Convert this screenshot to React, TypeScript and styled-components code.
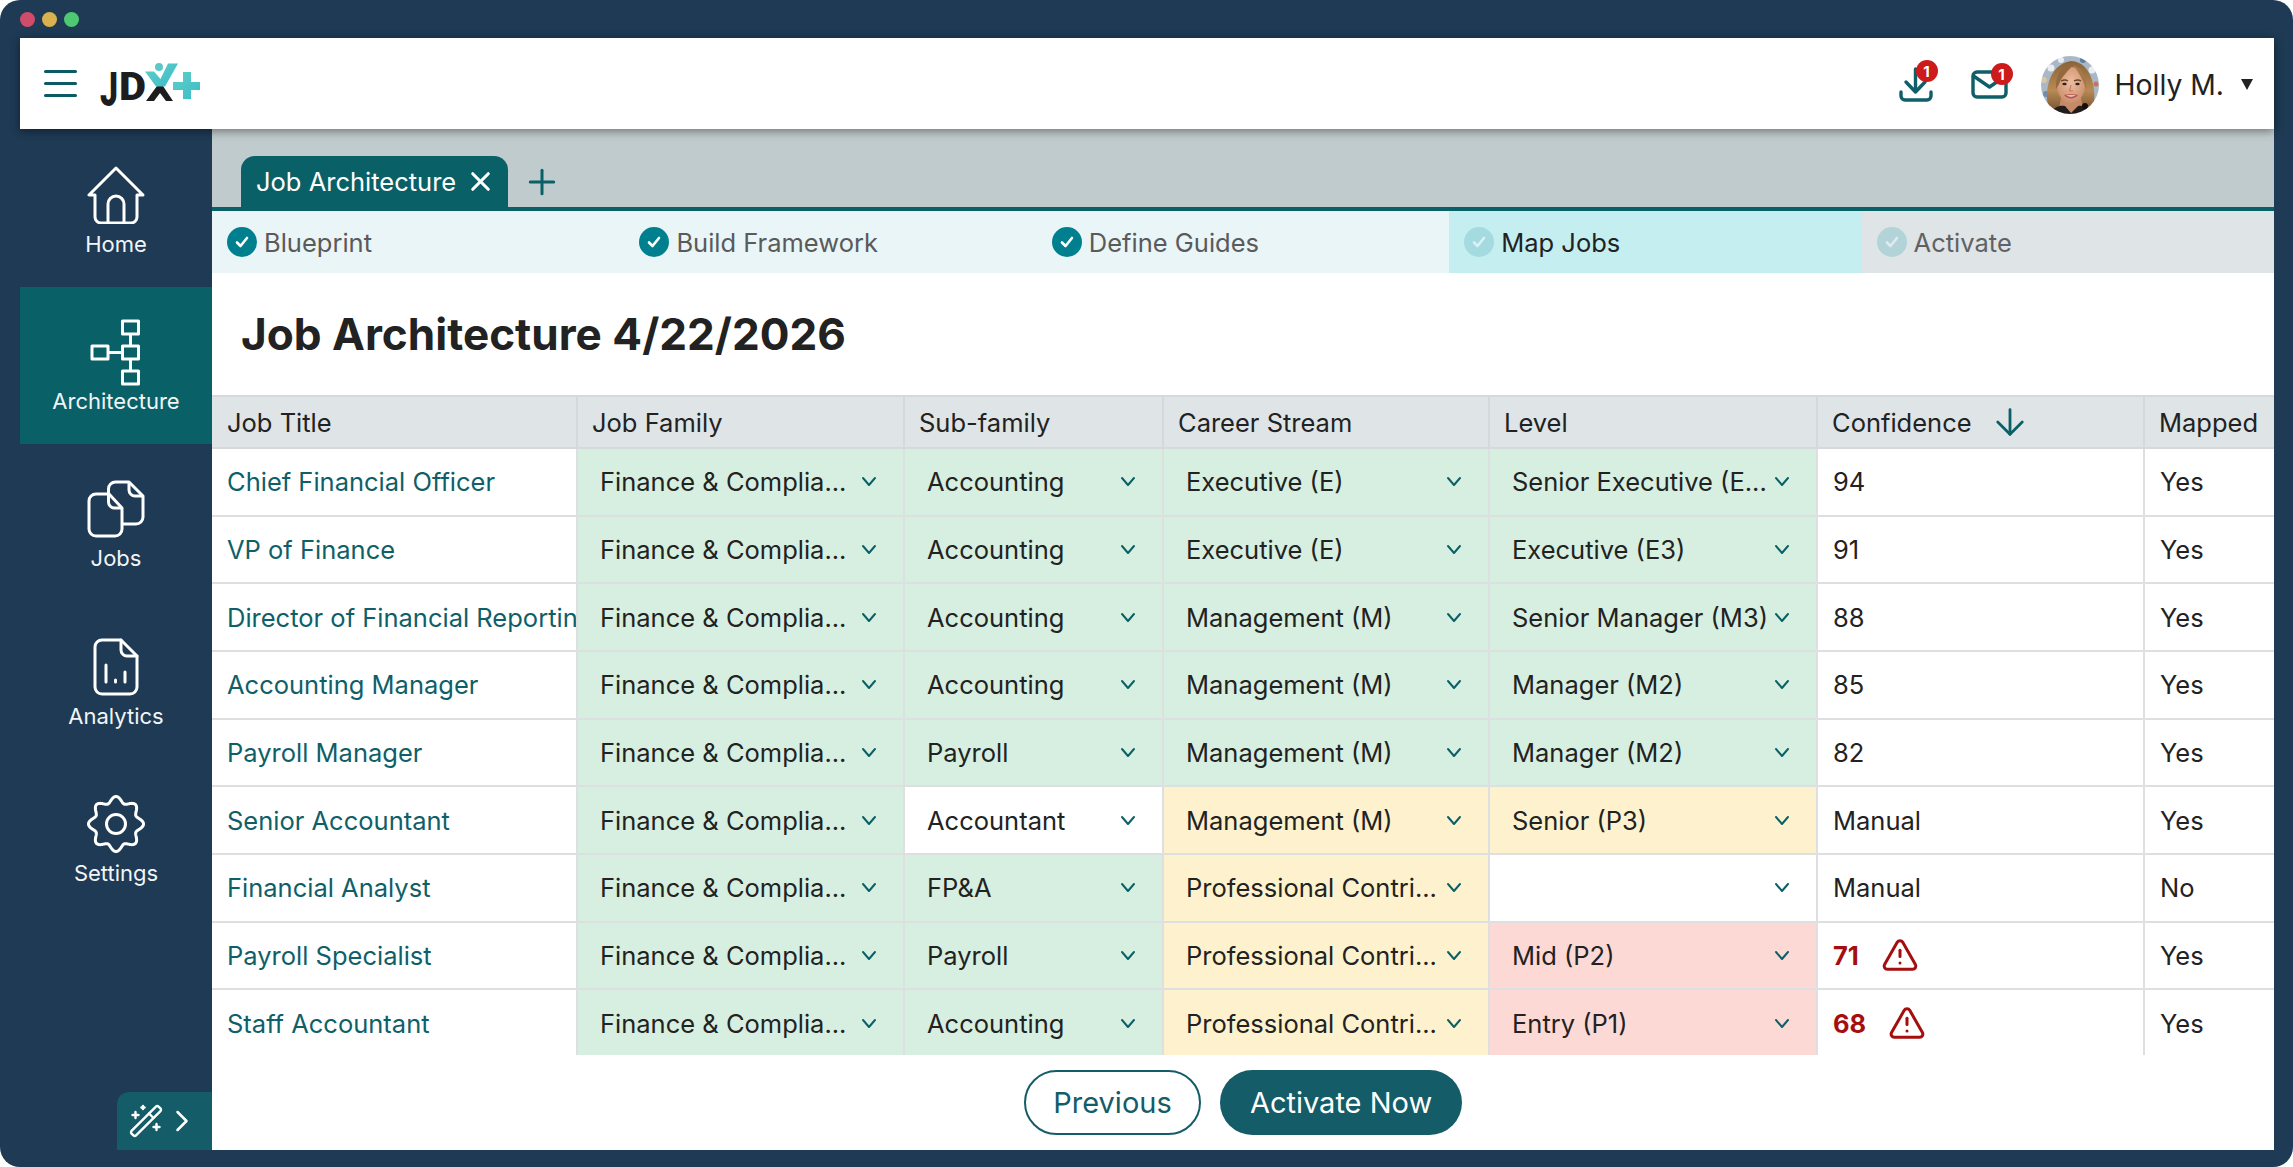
import styled, { createGlobalStyle } from "styled-components";
import { ArrowDown, ChevronRight, Plus, TriangleAlert, WandSparkles, X } from "lucide-react";

type Tone = "green" | "yellow" | "red" | "white";

interface Row {
  title: string;
  family: [string, Tone];
  sub: [string, Tone];
  stream: [string, Tone];
  level: [string, Tone];
  confidence: string;
  low?: boolean;
  mapped: string;
}

const FINANCE: [string, Tone] = ["Finance & Complia...", "green"];
const ACCOUNTING: [string, Tone] = ["Accounting", "green"];
const PAYROLL: [string, Tone] = ["Payroll", "green"];
const MGMT: [string, Tone] = ["Management (M)", "green"];
const PRO: [string, Tone] = ["Professional Contri...", "yellow"];

const rows: Row[] = [
  { title: "Chief Financial Officer", family: FINANCE, sub: ACCOUNTING, stream: ["Executive (E)", "green"], level: ["Senior Executive (E...", "green"], confidence: "94", mapped: "Yes" },
  { title: "VP of Finance", family: FINANCE, sub: ACCOUNTING, stream: ["Executive (E)", "green"], level: ["Executive (E3)", "green"], confidence: "91", mapped: "Yes" },
  { title: "Director of Financial Reporting", family: FINANCE, sub: ACCOUNTING, stream: MGMT, level: ["Senior Manager (M3)", "green"], confidence: "88", mapped: "Yes" },
  { title: "Accounting Manager", family: FINANCE, sub: ACCOUNTING, stream: MGMT, level: ["Manager (M2)", "green"], confidence: "85", mapped: "Yes" },
  { title: "Payroll Manager", family: FINANCE, sub: PAYROLL, stream: MGMT, level: ["Manager (M2)", "green"], confidence: "82", mapped: "Yes" },
  { title: "Senior Accountant", family: FINANCE, sub: ["Accountant", "white"], stream: ["Management (M)", "yellow"], level: ["Senior (P3)", "yellow"], confidence: "Manual", mapped: "Yes" },
  { title: "Financial Analyst", family: FINANCE, sub: ["FP&A", "green"], stream: PRO, level: ["", "white"], confidence: "Manual", mapped: "No" },
  { title: "Payroll Specialist", family: FINANCE, sub: PAYROLL, stream: PRO, level: ["Mid (P2)", "red"], confidence: "71", low: true, mapped: "Yes" },
  { title: "Staff Accountant", family: FINANCE, sub: ACCOUNTING, stream: PRO, level: ["Entry (P1)", "red"], confidence: "68", low: true, mapped: "Yes" },
];

const toneColors: Record<Tone, string> = {
  green: "#d7efe0",
  yellow: "#fdf2cd",
  red: "#fdd9d6",
  white: "#ffffff",
};

const GlobalStyle = createGlobalStyle`
  html, body {
    margin: 0;
    padding: 0;
    background: #ffffff;
  }
  * {
    box-sizing: border-box;
  }
`;

const Frame = styled.div`
  display: flex;
  flex-direction: column;
  width: 2293px;
  height: 1167px;
  padding: 0 19px 17px 20px;
  background: #1e3a54;
  border-radius: 20px;
  overflow: hidden;
  font-family: Inter, "Liberation Sans", sans-serif;
`;

const TitleBar = styled.div`
  display: flex;
  align-items: center;
  gap: 7px;
  height: 38px;
  flex: none;
`;

const Dot = styled.span<{ $color: string }>`
  width: 15px;
  height: 15px;
  border-radius: 50%;
  background: ${(p) => p.$color};
`;

const Header = styled.header`
  position: relative;
  z-index: 2;
  display: flex;
  align-items: center;
  flex: none;
  height: 91px;
  padding: 2px 21px 0 24px;
  background: #ffffff;
  box-shadow: 0 2px 9px rgba(0, 0, 0, 0.45);
`;

const Hamburger = styled.div`
  display: flex;
  flex-direction: column;
  gap: 8.5px;
  width: 33px;
  margin: -2px 23px 0 0;
  span {
    height: 3.5px;
    border-radius: 2px;
    background: #0b5a64;
  }
`;

const HeaderRight = styled.div`
  display: flex;
  align-items: center;
  margin-left: auto;
`;

const IconWrap = styled.div<{ $width: number; $mr: number }>`
  position: relative;
  display: flex;
  width: ${(p) => p.$width}px;
  margin-right: ${(p) => p.$mr}px;
`;

const Badge = styled.span`
  position: absolute;
  top: -7px;
  right: -5px;
  display: flex;
  align-items: center;
  justify-content: center;
  width: 22px;
  height: 22px;
  border-radius: 50%;
  background: #cd1b1b;
  color: #ffffff;
  font-size: 15px;
  font-weight: 700;
`;

const AvatarWrap = styled.div`
  width: 58px;
  height: 58px;
  border-radius: 50%;
  overflow: hidden;
  margin-right: 16px;
`;

const UserName = styled.span`
  font-size: 28.3px;
  color: #222222;
  margin-right: 17px;
`;

const Caret = styled.span`
  width: 0;
  height: 0;
  border-left: 6px solid transparent;
  border-right: 6px solid transparent;
  border-top: 11px solid #222222;
`;

const Body = styled.div`
  display: flex;
  flex: 1;
  min-height: 0;
`;

const Sidebar = styled.nav`
  position: relative;
  display: flex;
  flex-direction: column;
  flex: none;
  width: 192px;
  padding-top: 1px;
  background: #1e3a54;
`;

const NavItem = styled.div<{ $active?: boolean }>`
  display: flex;
  flex-direction: column;
  align-items: center;
  height: 157.2px;
  background: ${(p) => (p.$active ? "#0a6067" : "transparent")};
  color: #ffffff;
`;

const NavIcon = styled.div`
  display: flex;
  align-items: center;
  justify-content: center;
  height: 70px;
  margin-top: 30px;
`;

const NavLabel = styled.span`
  margin-top: 1px;
  font-size: 22px;
  line-height: 26px;
  color: #f2f5f7;
`;

const WandTab = styled.div`
  position: absolute;
  right: 0;
  bottom: 0;
  display: flex;
  align-items: center;
  width: 95px;
  height: 58px;
  padding-left: 11px;
  background: #135c68;
  border-top-left-radius: 12px;
  color: #ffffff;
`;

const Main = styled.main`
  display: flex;
  flex-direction: column;
  flex: 1;
  min-width: 0;
  background: #ffffff;
`;

const TabBar = styled.div`
  display: flex;
  align-items: flex-end;
  flex: none;
  height: 82px;
  padding-left: 29px;
  background: #c0cbcd;
  border-bottom: 4px solid #0a6067;
`;

const Tab = styled.div`
  display: flex;
  align-items: center;
  gap: 9px;
  width: 267px;
  height: 51px;
  padding-left: 15px;
  background: #0a6067;
  border-radius: 14px 14px 0 0;
  color: #ffffff;
  font-size: 25.5px;
`;

const AddTab = styled.div`
  display: flex;
  align-items: center;
  height: 51px;
  margin-left: 14px;
  color: #0a6067;
`;

const Steps = styled.div`
  display: grid;
  grid-template-columns: repeat(5, 1fr);
  flex: none;
  height: 62px;
`;

const Step = styled.div<{ $bg: string; $color: string }>`
  display: flex;
  align-items: center;
  gap: 7px;
  padding-left: 15px;
  background: ${(p) => p.$bg};
  color: ${(p) => p.$color};
  font-size: 25.5px;
`;

const StepCheck = styled.span<{ $bg: string }>`
  display: flex;
  align-items: center;
  justify-content: center;
  width: 30px;
  height: 30px;
  border-radius: 50%;
  background: ${(p) => p.$bg};
`;

const PageTitle = styled.h1`
  flex: none;
  height: 122px;
  margin: 0;
  padding: 34px 0 0 29px;
  font-size: 44.1px;
  line-height: 54px;
  font-weight: 700;
  color: #222222;
`;

const TableWrap = styled.div`
  flex: none;
  height: 660px;
  overflow: hidden;
`;

const TableGrid = styled.div`
  display: grid;
  grid-template-columns: 366px 327px 259px 326px 328px 327px 129px;
  grid-template-rows: 54px;
  grid-auto-rows: 67.67px;
  font-size: 25.5px;
  color: #222222;
`;

const TableRow = styled.div`
  display: contents;
`;

const HeadCell = styled.div`
  display: flex;
  align-items: center;
  gap: 17px;
  padding-left: 14px;
  background: #dfe4e6;
  border-top: 2px solid #d5d9db;
  border-bottom: 2px solid #d5d9db;
  border-right: 2px solid #d5d9db;
  &:first-of-type {
    padding-left: 15px;
  }
  &:last-of-type {
    border-right: none;
  }
`;

const Cell = styled.div`
  display: flex;
  align-items: center;
  gap: 22px;
  padding-left: 15px;
  background: #ffffff;
  border-right: 2px solid #dedfe0;
  border-bottom: 2px solid #dedfe0;
  white-space: nowrap;
`;

const TitleCell = styled(Cell)`
  padding-right: 0;
  overflow: hidden;
  color: #0f5f69;
`;

const SelectCell = styled.div<{ $tone: Tone }>`
  display: flex;
  align-items: center;
  justify-content: space-between;
  padding: 0 26px 0 22px;
  background: ${(p) => toneColors[p.$tone]};
  border-right: 2px solid #dedfe0;
  border-bottom: 2px solid #dedfe0;
  white-space: nowrap;
`;

const LastCell = styled(Cell)`
  border-right: none;
`;

const LowScore = styled.span`
  font-weight: 700;
  color: #a50e0e;
`;

const Footer = styled.div`
  display: flex;
  justify-content: center;
  align-items: flex-start;
  gap: 19px;
  flex: none;
  padding-top: 15px;
`;

const OutlineButton = styled.button`
  width: 177px;
  height: 65px;
  background: #ffffff;
  border: 2px solid #135c68;
  border-radius: 33px;
  color: #135c68;
  font-family: inherit;
  font-size: 29px;
`;

const FilledButton = styled.button`
  width: 242px;
  height: 65px;
  background: #135c68;
  border: none;
  border-radius: 33px;
  color: #ffffff;
  font-family: inherit;
  font-size: 29px;
`;

const Logo = () => (
  <svg width="104" height="66" viewBox="0 -10 104 66">
    <defs>
      <linearGradient id="logoTeal" x1="0" y1="0" x2="1" y2="1">
        <stop offset="0" stopColor="#63cfc4" />
        <stop offset="1" stopColor="#38bccb" />
      </linearGradient>
    </defs>
    <text fontFamily="Roboto, 'Liberation Sans', sans-serif" fontWeight="900" fill="#1d1d1d">
      <tspan x="0" y="44" fontSize="49" textLength="18" lengthAdjust="spacingAndGlyphs">J</tspan>
      <tspan x="19" y="38" fontSize="39" textLength="27" lengthAdjust="spacingAndGlyphs">D</tspan>
    </text>
    <path d="M46 39 L57 24 H63 L73 39 H66 L60 31 L54 39Z" fill="#1d1d1d" />
    <path d="M45 9.5 H54 L60.5 17 L68 1.5 H78 L65 24.5 H56Z" fill="url(#logoTeal)" />
    <circle cx="59" cy="5" r="4" fill="#5cc8c6" />
    <path d="M83 10 H91 V20 H100 V28 H91 V37 H83 V28 H73 V20 H83Z" fill="url(#logoTeal)" />
  </svg>
);

const DownloadIcon = () => (
  <svg width="34" height="35" viewBox="0 0 34 35" fill="none" stroke="#0f5f69" strokeWidth="3.4" strokeLinecap="round" strokeLinejoin="round">
    <path d="M2 25 V29 a4 4 0 0 0 4 4 H28 a4 4 0 0 0 4-4 V25" />
    <path d="M16.5 2 V24 M7 15 L16.5 25 L26 15" />
  </svg>
);

const MailIcon = () => (
  <svg width="37" height="29" viewBox="0 0 37 29" fill="none" stroke="#0f5f69" strokeWidth="3.4" strokeLinecap="round" strokeLinejoin="round">
    <rect x="2" y="2" width="33" height="25" rx="4" />
    <path d="M2.5 6 L18.5 17 L34.5 6" />
  </svg>
);

const Avatar = () => (
  <svg width="58" height="58" viewBox="0 0 58 58">
    <defs>
      <radialGradient id="skin" cx="0.5" cy="0.42" r="0.62">
        <stop offset="0" stopColor="#edbd9f" />
        <stop offset="1" stopColor="#c98c6b" />
      </radialGradient>
      <linearGradient id="hair" x1="0" y1="0" x2="0" y2="1">
        <stop offset="0" stopColor="#8a6238" />
        <stop offset="0.6" stopColor="#b88a55" />
        <stop offset="1" stopColor="#7b5733" />
      </linearGradient>
      <filter id="soft">
        <feGaussianBlur stdDeviation="0.45" />
      </filter>
    </defs>
    <g filter="url(#soft)">
      <rect width="58" height="58" fill="#aab8c6" />
      <circle cx="10" cy="12" r="3.5" fill="#e8eef2" />
      <circle cx="20" cy="4" r="3" fill="#e8eef2" />
      <circle cx="42" cy="4" r="3" fill="#5f7f9e" />
      <circle cx="51" cy="14" r="3.5" fill="#e8eef2" />
      <circle cx="3" cy="24" r="3" fill="#d8c7a6" />
      <circle cx="5" cy="38" r="3" fill="#6f8daa" />
      <circle cx="55" cy="28" r="2.5" fill="#cc6f62" />
      <path d="M8 54 C3 38 6 9 30 5 C52 6 56 36 52 54Z" fill="url(#hair)" />
      <path d="M20 42 H40 L43 58 H17Z" fill="#c68a69" />
      <path d="M10 58 C12 51 19 49 24 50 L30 57 L37 50 C44 49 50 52 52 58Z" fill="#241c1b" />
      <circle cx="44" cy="50" r="3" fill="#14110f" />
      <ellipse cx="30" cy="29" rx="14" ry="18" fill="url(#skin)" />
      <path d="M15 33 C14 18 22 10 32 9 C28 14 21 20 18 28Z" fill="#94693c" />
      <path d="M32 9 C41 11 46 20 45 33 C42 24 38 16 32 9Z" fill="#a47846" />
      <path d="M20 25 q4 -2 7 0 M33 25 q4 -2 7 0" fill="none" stroke="#6b4630" strokeWidth="1.3" />
      <ellipse cx="23.5" cy="28" rx="2.2" ry="1.3" fill="#2f231d" />
      <ellipse cx="36.5" cy="28" rx="2.2" ry="1.3" fill="#2f231d" />
      <path d="M30 29 L28.5 35 H32" fill="none" stroke="#b57b5c" strokeWidth="1" />
      <path d="M23 39 C26 38 34 38 37 39 C34 43.5 26 43.5 23 39Z" fill="#b8524e" />
      <path d="M25 39.5 C28 39 32 39 35 39.5 C32 41 28 41 25 39.5Z" fill="#f3e4da" />
    </g>
  </svg>
);

const HomeIcon = () => (
  <svg width="58" height="58" viewBox="0 0 58 58" fill="none" stroke="#fff" strokeWidth="3" strokeLinejoin="round" strokeLinecap="round">
    <path d="M29 2 L2 29 H8 V51 a6 6 0 0 0 6 6 H44 a6 6 0 0 0 6-6 V29 H56Z" />
    <path d="M21 56 V38 a8 8 0 0 1 16 0 V56" />
  </svg>
);

const ArchitectureIcon = () => (
  <svg width="54" height="67" viewBox="0 0 54 67" fill="none" stroke="#fff" strokeWidth="3" strokeLinejoin="round">
    <rect x="33.5" y="2" width="16" height="13" />
    <rect x="33.5" y="27" width="16" height="13" />
    <rect x="33.5" y="52" width="16" height="13" />
    <rect x="3" y="27" width="16" height="13" />
    <path d="M41.5 15 V27 M41.5 40 V52 M19 33.5 H33.5" />
  </svg>
);

const JobsIcon = () => (
  <svg width="58" height="58" viewBox="0 0 58 58" fill="none" stroke="#fff" strokeWidth="3" strokeLinejoin="round">
    <path d="M9 14 H22 L35 28 V49 a7 7 0 0 1-7 7 H9 a7 7 0 0 1-7-7 V21 a7 7 0 0 1 7-7Z" />
    <path d="M21.5 14 V22 a6 6 0 0 0 6 6 H35" />
    <path d="M21.5 14 V9 a7 7 0 0 1 7-7 H42 L56 16 V37 a7 7 0 0 1-7 7 H35" />
    <path d="M42 2 V10 a6 6 0 0 0 6 6 H56" />
  </svg>
);

const AnalyticsIcon = () => (
  <svg width="46" height="58" viewBox="0 0 46 58" fill="none" stroke="#fff" strokeWidth="3" strokeLinejoin="round" strokeLinecap="round">
    <path d="M9 2 H28 L44 18 V49 a7 7 0 0 1-7 7 H9 a7 7 0 0 1-7-7 V9 a7 7 0 0 1 7-7Z" />
    <path d="M28 2 V12 a6 6 0 0 0 6 6 H44" />
    <path d="M13 27 V44 M22.5 42 V44 M32 34 V44" />
  </svg>
);

function gearPath() {
  const points: string[] = [];
  for (let i = 0; i < 240; i++) {
    const t = (i / 240) * Math.PI * 2;
    const r = 24.5 + 3 * Math.cos(t * 8);
    const a = t - Math.PI / 2;
    points.push(`${(29 + r * Math.cos(a)).toFixed(2)} ${(29 + r * Math.sin(a)).toFixed(2)}`);
  }
  return `M${points.join(" L")}Z`;
}

const SettingsIcon = () => (
  <svg width="58" height="58" viewBox="0 0 58 58" fill="none" stroke="#fff" strokeWidth="3" strokeLinejoin="round">
    <path d={gearPath()} />
    <circle cx="29" cy="29" r="9.5" />
  </svg>
);

const SelectChevron = () => (
  <svg width="16" height="11" viewBox="0 0 16 11" fill="none" stroke="#0a6067" strokeWidth="2" strokeLinecap="round" strokeLinejoin="round">
    <path d="M2 2 L8 9 L14 2" />
  </svg>
);

const StepTick = ({ color }: { color: string }) => (
  <svg width="14" height="12" viewBox="0 0 14 12" fill="none" stroke={color} strokeWidth="2.6" strokeLinecap="round" strokeLinejoin="round">
    <path d="M2 6.5 L5.5 10 L12 2" />
  </svg>
);

const Select = ({ value }: { value: [string, Tone] }) => (
  <SelectCell $tone={value[1]}>
    <span>{value[0]}</span>
    <SelectChevron />
  </SelectCell>
);

const steps = [
  { label: "Blueprint", bg: "#e9f5f7", color: "#5a5a5a", check: "#00808f", tick: "#ffffff" },
  { label: "Build Framework", bg: "#e9f5f7", color: "#5a5a5a", check: "#00808f", tick: "#ffffff" },
  { label: "Define Guides", bg: "#e9f5f7", color: "#5a5a5a", check: "#00808f", tick: "#ffffff" },
  { label: "Map Jobs", bg: "#c5eef0", color: "#222222", check: "#a4dbe0", tick: "#d9f2f4" },
  { label: "Activate", bg: "#dfe4e6", color: "#5f6264", check: "#b2d3d8", tick: "#dfecee" },
];

const nav = [
  { label: "Home", icon: <HomeIcon /> },
  { label: "Architecture", icon: <ArchitectureIcon />, active: true },
  { label: "Jobs", icon: <JobsIcon /> },
  { label: "Analytics", icon: <AnalyticsIcon /> },
  { label: "Settings", icon: <SettingsIcon /> },
];

export default function App() {
  return (
    <>
      <GlobalStyle />
      <Frame>
        <TitleBar>
          <Dot $color="#cf4d6a" />
          <Dot $color="#d9b24f" />
          <Dot $color="#4fc873" />
        </TitleBar>
        <Header>
          <Hamburger>
            <span />
            <span />
            <span />
          </Hamburger>
          <Logo />
          <HeaderRight>
            <IconWrap $width={34} $mr={38}>
              <DownloadIcon />
              <Badge>1</Badge>
            </IconWrap>
            <IconWrap $width={37} $mr={33}>
              <MailIcon />
              <Badge>1</Badge>
            </IconWrap>
            <AvatarWrap>
              <Avatar />
            </AvatarWrap>
            <UserName>Holly M.</UserName>
            <Caret />
          </HeaderRight>
        </Header>
        <Body>
          <Sidebar>
            {nav.map((item) => (
              <NavItem key={item.label} $active={item.active}>
                <NavIcon>{item.icon}</NavIcon>
                <NavLabel>{item.label}</NavLabel>
              </NavItem>
            ))}
            <WandTab>
              <WandSparkles size={36} strokeWidth={1.6} />
              <ChevronRight size={36} strokeWidth={1.7} />
            </WandTab>
          </Sidebar>
          <Main>
            <TabBar>
              <Tab>
                Job Architecture
                <X size={31} strokeWidth={2.4} />
              </Tab>
              <AddTab>
                <Plus size={40} strokeWidth={1.8} />
              </AddTab>
            </TabBar>
            <Steps>
              {steps.map((s) => (
                <Step key={s.label} $bg={s.bg} $color={s.color}>
                  <StepCheck $bg={s.check}>
                    <StepTick color={s.tick} />
                  </StepCheck>
                  {s.label}
                </Step>
              ))}
            </Steps>
            <PageTitle>Job Architecture 4/22/2026</PageTitle>
            <TableWrap>
              <TableGrid>
                <TableRow>
                  <HeadCell>Job Title</HeadCell>
                  <HeadCell>Job Family</HeadCell>
                  <HeadCell>Sub-family</HeadCell>
                  <HeadCell>Career Stream</HeadCell>
                  <HeadCell>Level</HeadCell>
                  <HeadCell>
                    Confidence
                    <ArrowDown size={42} strokeWidth={1.6} color="#0a6067" />
                  </HeadCell>
                  <HeadCell>Mapped</HeadCell>
                </TableRow>
                {rows.map((row) => (
                  <TableRow key={row.title}>
                    <TitleCell>{row.title}</TitleCell>
                    <Select value={row.family} />
                    <Select value={row.sub} />
                    <Select value={row.stream} />
                    <Select value={row.level} />
                    <Cell>
                      {row.low ? <LowScore>{row.confidence}</LowScore> : row.confidence}
                      {row.low && <TriangleAlert size={38} strokeWidth={1.9} color="#a50e0e" />}
                    </Cell>
                    <LastCell>{row.mapped}</LastCell>
                  </TableRow>
                ))}
              </TableGrid>
            </TableWrap>
            <Footer>
              <OutlineButton>Previous</OutlineButton>
              <FilledButton>Activate Now</FilledButton>
            </Footer>
          </Main>
        </Body>
      </Frame>
    </>
  );
}
